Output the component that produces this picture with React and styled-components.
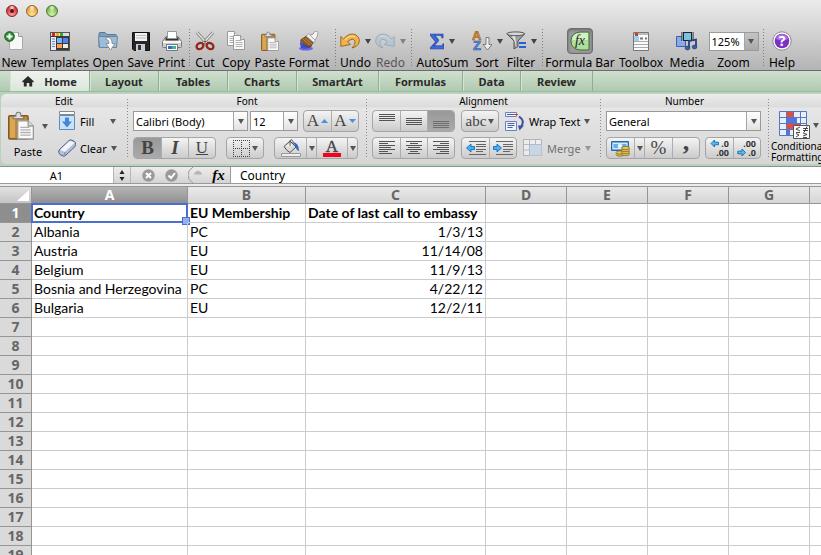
// Libs
import React from 'react';
import styled, { createGlobalStyle } from 'styled-components';

const uiFont = '"Noto Sans", "Open Sans", sans-serif';
const sheetFont = 'Lato, "Open Sans", sans-serif';
const serifFont = '"Liberation Serif", serif';

const GlobalStyle = createGlobalStyle`
  * {
    box-sizing: border-box;
  }

  body {
    margin: 0;
    overflow: hidden;
    font-family: ${uiFont};
    font-size: 12px;
    color: #000;
  }

  button, input, select {
    margin: 0;
    padding: 0;
    border: 0;
    background: none;
    font: inherit;
    color: inherit;
  }

  svg {
    display: block;
    flex: none;
  }
`;

const Window = styled.div`
  height: 100vh;
  display: flex;
  flex-direction: column;
  overflow: hidden;
  background: #fff;
`;

// Title bar and toolbar
const TopBar = styled.header`
  flex: none;
  background: linear-gradient(#ebebeb, #d6d6d6 40%, #b4b4b4);
  border-bottom: 1px solid #6f6a6f;
`;

const TitleBar = styled.div`
  height: 26px;
  display: flex;
  align-items: center;
  gap: 8px;
  padding: 0 6px;
  padding-bottom: 4px;
`;

const Light = styled.button`
  width: 12px;
  height: 12px;
  border-radius: 50%;
  border: 1px solid ${(p) => p.edge};
  background:
    radial-gradient(ellipse at 50% 12%, rgba(255,255,255,.9), rgba(255,255,255,0) 45%),
    radial-gradient(circle at 50% 85%, ${(p) => p.glow}, ${(p) => p.tone} 75%);
  display: flex;
  align-items: center;
  justify-content: center;

  &::after {
    content: '';
    width: 4px;
    height: 4px;
    border-radius: 50%;
    background: ${(p) => (p.dirty ? '#5e0d0d' : 'transparent')};
  }
`;

const Toolbar = styled.div`
  height: 44px;
  display: flex;
`;

const Tool = styled.button`
  flex: none;
  width: ${(p) => p.w}px;
  height: 44px;
  display: flex;
  flex-direction: column;
  align-items: center;
  white-space: nowrap;
  opacity: ${(p) => (p.disabled ? 0.55 : 1)};
`;

const ToolIcon = styled.span`
  height: 30px;
  display: flex;
  align-items: center;
  gap: 5px;
`;

const ToolLabel = styled.span`
  line-height: 13px;
`;

const Pressed = styled.span`
  width: 26px;
  height: 26px;
  display: flex;
  align-items: center;
  justify-content: center;
  border: 1px solid #6d6d6d;
  border-radius: 4px;
  background: #9c9c9c;
  box-shadow: inset 0 1px 3px #666;
`;

const ToolDivider = styled.span`
  flex: none;
  width: 6px;
  height: 40px;
  margin-top: 2px;
  background: radial-gradient(circle, #7d7d7d 0 1px, transparent 1px) center top / 3px 3px repeat-y;
`;

const ZoomField = styled.label`
  flex: none;
  width: 53px;
  display: flex;
  flex-direction: column;
  align-items: center;
`;

// Tabs
const Tabs = styled.nav`
  flex: none;
  height: 20px;
  display: flex;
  padding-left: 10px;
  background: linear-gradient(#cfe0cd, #b0c9b0);
`;

const Tab = styled.button`
  width: ${(p) => p.w}px;
  display: flex;
  align-items: center;
  justify-content: center;
  gap: 10px;
  border-right: 1px solid #8fae93;
  box-shadow: inset 1px 0 #d5e4d4;
  font-size: 11px;
  font-weight: 700;
  color: #2b2b2b;
  background: ${(p) => (p.active ? 'linear-gradient(#eef3ed, #dbe6da)' : 'none')};
`;

// Ribbon
const RibbonFrame = styled.div`
  flex: none;
  padding: 2px 0 2px 1px;
  background: #b9d2bb;
  border-top: 1px solid #9cba9f;
  border-bottom: 1px solid #8f8f8f;
`;

const Ribbon = styled.div`
  height: 70px;
  display: flex;
  border-radius: 5px 0 0 5px;
  background: linear-gradient(#ececec, #dcdcdc 18%, #e6e6e6 20%, #d6d6d6);
  overflow: hidden;
`;

const Group = styled.section`
  flex: none;
  width: ${(p) => p.w}px;
  display: flex;
  flex-direction: column;
`;

const GroupTitle = styled.h2`
  margin: 0;
  height: 14px;
  line-height: 14px;
  font-size: 10px;
  font-weight: 400;
  text-align: center;
`;

const GroupBody = styled.div`
  display: flex;
  flex-direction: column;
  gap: 5px;
  padding: 2px 0 0 5px;
`;

const GroupDivider = styled.span`
  flex: none;
  width: 1px;
  margin: 5px 0;
  background: repeating-linear-gradient(#8b8b8b 0 1px, transparent 1px 3px);
`;

const Line = styled.div`
  height: 22px;
  display: flex;
  align-items: center;
  gap: ${(p) => p.gap || 5}px;
`;

const EditBody = styled.div`
  display: flex;
  gap: 10px;
  padding: 2px 0 0 7px;
`;

const Stack = styled.div`
  display: flex;
  flex-direction: column;
  gap: 5px;
`;

const PasteButton = styled.button`
  width: 40px;
  display: flex;
  flex-direction: column;
  align-items: center;
  gap: 4px;
  padding-top: 1px;
  font-size: 11px;
  line-height: 14px;
`;

const PasteArt = styled.span`
  display: flex;
  align-items: center;
  gap: 8px;
`;

const FlatButton = styled.button`
  width: ${(p) => p.w}px;
  height: 22px;
  display: flex;
  align-items: center;
  gap: 4px;
  font-size: 11px;
  white-space: nowrap;
  opacity: ${(p) => (p.disabled ? 0.5 : 1)};

  svg:last-child {
    margin-left: auto;
  }
`;

const Segments = styled.div`
  flex: none;
  height: 22px;
  display: flex;
  border: 1px solid #a5a5a5;
  border-radius: 4px;
  background: linear-gradient(#f4f4f4, #cbcbcb);
  overflow: hidden;
`;

const Segment = styled.button`
  width: ${(p) => p.w || 27}px;
  display: flex;
  align-items: center;
  justify-content: center;
  gap: 2px;
  color: #444;
  background: ${(p) => (p.on ? 'linear-gradient(#999, #aaa)' : 'none')};

  & + & {
    border-left: 1px solid #adadad;
  }
`;

const Glyph = styled.span`
  font-family: ${serifFont};
  font-size: ${(p) => p.size || 19}px;
  line-height: ${(p) => p.leading || 20}px;
  font-weight: ${(p) => (p.bold ? 700 : 400)};
  font-style: ${(p) => (p.italic ? 'italic' : 'normal')};
  text-decoration: ${(p) => (p.underline ? 'underline' : 'none')};
`;

// the comma hangs on the baseline, so its line box is raised to centre it
const CommaGlyph = styled(Glyph)`
  padding-bottom: 12px;
`;

const ComboBox = styled.span`
  position: relative;
  flex: none;
  display: block;
  width: ${(p) => p.w}px;
  height: ${(p) => p.h || 20}px;
  border: 1px solid #9a9a9a;
  background: #fff;
  font-size: 11px;
`;

const ComboSelect = styled.select`
  appearance: none;
  width: 100%;
  height: 100%;
  padding: 0 16px 0 2px;
  border-radius: 0;
`;

const ComboArrow = styled.span`
  position: absolute;
  top: 0;
  right: 0;
  bottom: 0;
  width: 14px;
  display: flex;
  align-items: center;
  justify-content: center;
  border-left: 1px solid #a5a5a5;
  background: ${(p) => (p.dark ? 'linear-gradient(#c4c4c4, #a9a9a9)' : 'linear-gradient(#fff, #e2e2e2)')};
  pointer-events: none;
`;

const ConditionalButton = styled.button`
  display: flex;
  flex-direction: column;
  padding: 3px 0 0 2px;
  font-size: 10px;
  line-height: 11px;
  text-align: left;
`;

const ConditionalArt = styled.span`
  display: flex;
  align-items: center;
  gap: 3px;
  padding: 0 0 2px 8px;
`;

// Formula bar
const FormulaBar = styled.div`
  flex: none;
  height: 16px;
  display: flex;
  background: linear-gradient(#ededed, #d4d4d4);
`;

const NameBox = styled.input`
  width: 114px;
  background: #fff;
  text-align: center;
  font-size: 11px;
  border-right: 1px solid #b5b5b5;
`;

const BarButton = styled.button`
  width: ${(p) => p.w}px;
  display: flex;
  align-items: center;
  justify-content: center;
  border-right: ${(p) => (p.edge ? '1px solid #b5b5b5' : '0')};
`;

const BarTools = styled.div`
  width: 100px;
  display: flex;
  padding-left: 5px;
  border-right: 1px solid #9a9a9a;
`;

const FormulaInput = styled.input`
  flex: 1;
  min-width: 0;
  background: #fff;
  padding-left: 9px;
  font-size: 12px;
`;

const BarEdge = styled.div`
  flex: none;
  height: 3px;
  border-top: 1px solid #9a9a9a;
  background: #ececec;
`;

// Sheet
const Sheet = styled.main`
  flex: 1;
  min-height: 0;
  overflow: hidden;
`;

const Grid = styled.table`
  width: 100%;
  min-width: 891px;
  table-layout: fixed;
  border-collapse: separate;
  border-spacing: 0;
  font-family: ${sheetFont};
  font-size: 14px;
`;

const Col = styled.col`
  width: ${(p) => (p.w ? `${p.w}px` : 'auto')};
`;

const ColHead = styled.th`
  height: 18px;
  padding: 0;
  border: 1px solid #969696;
  border-left: 0;
  font-family: ${uiFont};
  font-size: 14px;
  line-height: 16px;
  color: ${(p) => (p.active ? '#fff' : '#666')};
  background: ${(p) => (p.active ? 'linear-gradient(#b5b5b5, #8f8f8f)' : 'linear-gradient(#e9e9e9, #d6d6d6)')};
`;

const Corner = styled.th`
  height: 18px;
  padding: 0;
  border: 1px solid #969696;
  border-left: 0;
  background: linear-gradient(#e2e2e2, #c4c4c4);

  svg {
    margin-left: auto;
  }
`;

const RowHead = styled.th`
  height: 19px;
  padding: 0;
  border-right: 1px solid #969696;
  border-bottom: 1px solid #969696;
  font-family: ${uiFont};
  font-size: 14px;
  line-height: 18px;
  color: ${(p) => (p.active ? '#fff' : '#666')};
  background: ${(p) => (p.active ? '#8e8e8e' : '#dadada')};
`;

const Cell = styled.td`
  position: relative;
  height: 19px;
  padding: 0 2px;
  border-right: 1px solid #ccc;
  border-bottom: 1px solid #ccc;
  line-height: 18px;
  white-space: nowrap;
  text-align: ${(p) => (p.right ? 'right' : 'left')};
  font-weight: ${(p) => (p.bold ? 700 : 400)};
`;

const Selection = styled.span`
  position: absolute;
  top: -1px;
  right: -1px;
  bottom: -1px;
  left: -1px;
  border: 2px solid #4a6fd0;
  pointer-events: none;

  &::after {
    content: '';
    position: absolute;
    right: -4px;
    bottom: -4px;
    width: 6px;
    height: 6px;
    border: 1px solid #4a6fd0;
    background: #8fb1ee;
  }
`;

// Icons
const Caret = ({ color = '#555' }) => (
	<svg width="6" height="5" viewBox="0 0 6 5"><path d="M0 0h6L3 5z" fill={color} /></svg>
);

const Page = ({ x, y, w = 12, h = 15 }) => (
	<g transform={`translate(${x} ${y})`}>
		<path d={`M.5.5h${w - 5}l4 4v${h - 5}h-${w - 1}z`} fill="#fafafa" stroke="#999" />
		<path d={`M${w - 4.5}.5v4h4`} fill="#ddd" stroke="#999" />
		<path d={`M2.500 5.500h${w - 6}M2.500 7.500h${w - 5}M2.500 9.500h${w - 5}M2.500 11.500h${w - 5}`} stroke="#b0b0b0" />
	</g>
);

const NewIcon = () => (
	<svg width="20" height="20" viewBox="0 0 20 20">
		<path d="M5.500 1.500h9l4 4v13h-13z" fill="#f8f8f8" stroke="#aaa" />
		<path d="M14.500 1.500v4h4" fill="#ddd" stroke="#999" />
		<circle cx="5.500" cy="5.500" r="4.800" fill="#2f8a32" stroke="#145c18" />
		<path d="M5.500 2.500v6M2.500 5.500h6" stroke="#fff" strokeWidth="2" />
	</svg>
);

const TemplatesIcon = () => (
	<svg width="20" height="20" viewBox="0 0 20 20">
		<rect x=".5" y="1.500" width="19" height="18" fill="#3a3a3a" stroke="#555" />
		<path d="M1 2h18v3H1z" fill="#ddd" />
		<path d="M2 2h3v3H2z" fill="#d22" /><path d="M6 2h3v3H6z" fill="#e9b800" /><path d="M10 2h3v3h-3z" fill="#39a635" />
		<path d="M1 6h5v13H1z" fill="#e8ecf5" />
		<path d="M2 8h3M2 10.500h3M2 13h3M2 15.500h3" stroke="#6e86b8" />
		<path d="M7 7h5v5H7z" fill="#79b3ff" /><path d="M13 7h5v5h-5z" fill="#4c86e8" />
		<path d="M7 13h5v4H7z" fill="#ff9c5a" /><path d="M13 13h5v4h-5z" fill="#f3ede0" />
	</svg>
);

const OpenIcon = () => (
	<svg width="20" height="20" viewBox="0 0 20 20">
		<path d="M1 16V2.500q0-1 1-1h5l2 2h8.500q1 0 1 1V16z" fill="#7b9fbd" stroke="#567b9a" />
		<path d="M.5 5.500h19l-1 11h-17z" fill="#9dbdd6" stroke="#6488a6" />
		<path d="M8 6.500c4-.5 6 1.500 6 6h3l-4.500 6.500L8 12.500h3c0-3-1-4-3-4z" fill="#fff" stroke="#777" strokeWidth=".7" />
	</svg>
);

const SaveIcon = () => (
	<svg width="18" height="19" viewBox="0 0 18 19">
		<path d="M.5.500h17v18H2l-1.500-1.500z" fill="#26262a" stroke="#111" />
		<path d="M3 1h12v8H3z" fill="#f2f2f2" /><path d="M4 3.500h10M4 6h10" stroke="#bbb" />
		<path d="M4 12h9v7H4z" fill="#c9ccd2" /><path d="M6 13h3v5H6z" fill="#333" />
	</svg>
);

const PrintIcon = () => (
	<svg width="20" height="20" viewBox="0 0 20 20">
		<path d="M4 5.500h12l3.500 5v5q0 1-1 1h-17q-1 0-1-1v-5z" fill="#cfcfcf" stroke="#777" />
		<path d="M3.500 6.500h13v3h-13z" fill="#333" />
		<path d="M5.500.500h9v7h-9z" fill="#fff" stroke="#999" />
		<path d="M1 10h18v2H1z" fill="#f4f4f4" />
		<path d="M4.500 13.500h11v6h-11z" fill="#fff" stroke="#777" />
		<path d="M6 15h4v3H6z" fill="#2e6bd8" /><path d="M10 15h4v3h-4z" fill="#3cb8a0" />
	</svg>
);

const CutIcon = () => (
	<svg width="20" height="20" viewBox="0 0 20 20" fill="none">
		<path d="M2 1.500 12.500 13M18 1.500 7.500 13" stroke="#777" strokeWidth="3" />
		<path d="M2 1.500 12.500 13M18 1.500 7.500 13" stroke="#e8e8e8" strokeWidth="1.400" />
		<ellipse cx="5" cy="15" rx="3.600" ry="2.900" transform="rotate(-35 5 15)" stroke="#93291b" strokeWidth="2.400" />
		<ellipse cx="15" cy="15" rx="3.600" ry="2.900" transform="rotate(35 15 15)" stroke="#93291b" strokeWidth="2.400" />
		<circle cx="10" cy="10.500" r="1" fill="#444" />
	</svg>
);

const CopyIcon = () => (
	<svg width="20" height="20" viewBox="0 0 20 20"><Page x={1} y={0} /><Page x={7} y={4} /></svg>
);

const PasteIcon = ({ size = 20 }) => (
	<svg width={size} height={Math.round(size * 1.15)} viewBox="0 0 20 23">
		<rect x=".5" y="3.500" width="15" height="18" rx="1" fill="#bd8733" stroke="#80571b" />
		<path d="M1.500 4.500h4v16h-4z" fill="#d8a857" />
		<path d="M4 6V4h2q0-3 2-3t2 3h2v2z" fill="#ddd" stroke="#777" strokeWidth=".8" />
		<Page x={7} y={7} w={13} h={15} />
	</svg>
);

const FormatIcon = () => (
	<svg width="20" height="20" viewBox="0 0 20 20">
		<ellipse cx="7" cy="17.500" rx="7" ry="2" fill="#6c6ae8" />
		<path d="M1 10q5 6 12 5-4 4-11 2-1-3-1-7z" fill="#3f48d0" />
		<path d="M1.500 9l6-4 7 6-3 5q-7-1-10-7z" fill="#8a5a22" stroke="#54350f" strokeWidth=".7" />
		<path d="M4 8l7 6M6 7l7 6" stroke="#b98a4e" />
		<path d="M7 5l3-2.500L16.500 9 15 12z" fill="#eee" stroke="#888" strokeWidth=".7" />
		<path d="M11 4q4 0 4-3l3-1 1 2q-1 5-3 7z" fill="#f5f5f5" stroke="#888" strokeWidth=".7" />
	</svg>
);

const UndoIcon = ({ flip, fill = '#f0b44c', edge = '#a0681b' }) => (
	<svg width="20" height="18" viewBox="0 0 20 18">
		<g transform={flip ? 'translate(20 0) scale(-1 1)' : undefined}>
			<path d="M.8 4.500 3.500 7Q9 .5 15 2.500q5 2.500 4.200 7.500-1 4.500-7.200 6 4-3.500 3-7-2-4-7.500.8l3 2.700-9.700 1.800z" fill={fill} stroke={edge} />
			<path d="M5 8Q10 2.500 15 4.500" fill="none" stroke="#fff" strokeOpacity=".6" />
		</g>
	</svg>
);

const SigmaIcon = () => (
	<svg width="14" height="20" viewBox="0 0 14 20">
		<text x="7" y="18" textAnchor="middle" fontFamily="Liberation Serif" fontWeight="700" fontSize="24" fill="#3e6ce0" stroke="#1c3fa5" strokeWidth=".7">Σ</text>
	</svg>
);

const SortIcon = () => (
	<svg width="20" height="20" viewBox="0 0 20 20">
		<text x="0" y="9" fontFamily="Liberation Sans" fontWeight="700" fontSize="13" fill="#d98c2b" stroke="#8c5310" strokeWidth=".5">A</text>
		<text x="1" y="19" fontFamily="Liberation Sans" fontWeight="700" fontSize="13" fill="#5a94e6" stroke="#1d4da3" strokeWidth=".5">Z</text>
		<path d="M14 6.500h3v7h3l-4.500 5.500-4.500-5.500h3z" fill="#eee" stroke="#666" strokeWidth=".8" />
	</svg>
);

const FilterIcon = () => (
	<svg width="20" height="20" viewBox="0 0 20 20">
		<path d="M1 3l7 7v8l4-2.500V10l6.500-7z" fill="#a0a0a0" stroke="#555" />
		<path d="M8.500 10 6 5h3l1.500 12z" fill="#e8e8e8" />
		<ellipse cx="9.700" cy="2.800" rx="9" ry="1.900" fill="#d8d8d8" stroke="#555" />
		<path d="M13 12h7M13 16h7" stroke="#2462d6" strokeWidth="2.200" />
	</svg>
);

const FxIcon = () => (
	<svg width="20" height="20" viewBox="0 0 20 20">
		<path d="M10 1h9v18h-9Q1 18 1 10t9-9z" fill="#acdf9b" stroke="#416b38" />
		<path d="M10 2h8v7H2q1-7 8-7z" fill="#d2f1c7" />
		<text x="10" y="14" textAnchor="middle" fontFamily="Liberation Serif" fontStyle="italic" fontSize="14" fill="#222">fx</text>
	</svg>
);

const ToolboxIcon = () => (
	<svg width="16" height="19" viewBox="0 0 16 19">
		<path d="M.5.500h15v18H.5z" fill="#fafafa" stroke="#777" />
		<path d="M1 1h14v2H1z" fill="#bbb" />
		<path d="M1 4h5v5H1z" fill="#9fd0f0" /><path d="M2 1h3v3H2z" fill="#d23a1e" />
		<path d="M7 5.500h3v2H7zM12 5.500h2v2h-2z" fill="#777" />
		<path d="M1 9.500h14M1 12.500h14M1 15.500h14" stroke="#aaa" />
	</svg>
);

const MediaIcon = () => (
	<svg width="22" height="20" viewBox="0 0 22 20">
		<path d="M.5 5.500h9v10h-9z" fill="#88a9ec" stroke="#4060ae" />
		<path d="M5.500 1h12v9h-12z" fill="#222" /><path d="M8 2h7v7H8z" fill="#78c3e5" />
		<path d="M6.500 1.500v9M16.500 1.500v9" stroke="#fff" strokeDasharray="1 1" />
		<path d="M13 17V10l7-1.500V16" fill="none" stroke="#2b3f79" strokeWidth="1.800" />
		<ellipse cx="11.500" cy="17" rx="2.400" ry="1.900" fill="#3e5caa" stroke="#233566" strokeWidth=".6" />
		<ellipse cx="18.500" cy="16" rx="2.400" ry="1.900" fill="#3e5caa" stroke="#233566" strokeWidth=".6" />
	</svg>
);

const HelpIcon = () => (
	<svg width="20" height="20" viewBox="0 0 20 20">
		<circle cx="10" cy="10" r="9.200" fill="#fff" stroke="#888" />
		<circle cx="10" cy="10" r="7.300" fill="#7b2fc4" />
		<path d="M4 8q1-5 6-5t6 5q-6 3-12 0z" fill="#a86be0" />
		<text x="10" y="15" textAnchor="middle" fontFamily="Noto Sans" fontWeight="700" fontSize="14" fill="#fff">?</text>
	</svg>
);

const HomeIcon = () => (
	<svg width="12" height="11" viewBox="0 0 12 11">
		<path d="M6 0 12 5.500l-1 1-.8-.7V10.500H7.300V7H4.700v3.500H1.800V5.800L1 6.500l-1-1z" fill="#2b2b2b" />
	</svg>
);

const FillIcon = () => (
	<svg width="18" height="20" viewBox="0 0 18 20">
		<path d="M1.500.500h15v3h-15z" fill="#fff" stroke="#888" />
		<path d="M1.500 4.500h15v14h-15z" fill="#c9e2f8" stroke="#5e8dba" />
		<path d="M7 6.500h4v4h3L9 16.500 4 10.500h3z" fill="#4586d8" />
	</svg>
);

const ClearIcon = () => (
	<svg width="18" height="18" viewBox="0 0 18 18">
		<path d="M1 11 10.500 2q1.500-1.500 3-1l3 1.500q1.500 1 1 3L17 7.500l-9.500 9q-1 1-2.500.5L2 15.500q-2-1.500-1-4.500z" fill="#b4bfdc" stroke="#555f80" />
		<path d="M2 11 11 2.500q1-.7 2-.3l3.500 1.500L7 12.800z" fill="#f3f5fb" />
		<path d="M7 13v3.500" stroke="#7681a5" />
	</svg>
);

const BordersIcon = () => (
	<svg width="17" height="17" viewBox="0 0 17 17">
		<path d="M0 .5h17M0 8.500h17M0 16.500h17M.5 0v17M8.500 0v17M16.500 0v17" fill="none" stroke="#444" strokeDasharray="1 1" />
	</svg>
);

const BucketIcon = () => (
	<svg width="20" height="18" viewBox="0 0 20 18">
		<path d="M3 7.500 9 2l6 6-6 5.500q-3-1-6-6z" fill="#d9d9d9" stroke="#555" />
		<path d="M5 7.500 9 4l3 3z" fill="#fff" />
		<path d="M9 7V1.500q2-2 3 1V5" fill="none" stroke="#555" />
		<path d="M12 3q6 1 6 9-3-1-3-4z" fill="#2e66c4" />
		<path d="M.5 14.500h19v3H.5z" fill="#eee" stroke="#999" />
	</svg>
);

const FontColorIcon = () => (
	<svg width="18" height="18" viewBox="0 0 18 18">
		<text x="9" y="12.500" textAnchor="middle" fontFamily="Liberation Serif" fontSize="17" fill="#444" stroke="#444" strokeWidth=".4">A</text>
		<path d="M0 14h18v4H0z" fill="#f5001d" />
	</svg>
);

const Delta = ({ down }) => (
	<svg width="7" height="4" viewBox="0 0 7 4"><path d={down ? 'M0 0h7L3.500 4z' : 'M0 4h7L3.500 0z'} fill="#4a90e2" /></svg>
);

// rows holds [x, width] of each text line, two pixels apart
const LinesIcon = ({ rows, top = 0, faded }) => (
	<svg width="16" height="15" viewBox="0 0 16 15">
		{rows.map(([x, w], i) => (
			<path key={i} d={`M${x} ${top + i * 2 + 0.5}h${w}`} stroke={faded ? '#6e6e6e' : '#555'} />
		))}
	</svg>
);

const IndentIcon = ({ right }) => (
	<svg width="20" height="15" viewBox="0 0 20 15">
		<path d="M3 .5h17M10 3.500h10M10 5.500h10M10 8.500h10M10 10.500h7M3 13.500h17" stroke="#666" />
		<path d={right ? 'M8.500 7 4 3v2.500H.5v3H4V11z' : 'M.5 7 5 3v2.500h3.500v3H5V11z'} fill="#45b4f5" stroke="#1b6bb0" strokeWidth=".9" />
	</svg>
);

const WrapIcon = () => (
	<svg width="20" height="19" viewBox="0 0 20 19" fill="none">
		<path d="M.5.500h11v4H.5zM.5 9.500h11v9H.5z" fill="#eef2fb" stroke="#6c80bd" />
		<path d="M2 2.500h6M2.500 11.500h7M2.500 13.500h7M2.500 15.500h5" stroke="#4860a8" />
		<path d="M8 2.500h5" stroke="#e5331f" />
		<path d="M14 4.500q6 4 2.500 9.500" stroke="#3c539e" strokeWidth="2" />
		<path d="M19 13.500h-6l1.500 5z" fill="#3c539e" />
	</svg>
);

const MergeIcon = () => (
	<svg width="20" height="18" viewBox="0 0 20 18">
		<path d="M.5.500h18v16H.5z" fill="#fff" stroke="#888" /><path d="M6 5h12.500v11.500H6z" fill="#b7d3ef" />
		<path d="M.5 5.500h18M6.500.500v16M12.500.500v5M.5 11h6" stroke="#78a0c8" />
	</svg>
);

const MoneyIcon = () => (
	<svg width="19" height="17" viewBox="0 0 19 17">
		<path d="M.5 1.500h17v9H.5z" fill="#69aee6" stroke="#2d679d" />
		<path d="M2 3.500h14v5H2z" fill="none" stroke="#d5ebfb" /><circle cx="9" cy="6" r="2.300" fill="#e8f4fd" />
		<g fill="#e0c45c" stroke="#775e15" strokeWidth=".7">
			<ellipse cx="9" cy="14.500" rx="4" ry="1.700" /><ellipse cx="9" cy="12.500" rx="4" ry="1.700" />
			<ellipse cx="14.500" cy="14" rx="4" ry="1.700" /><ellipse cx="14.500" cy="12" rx="4" ry="1.700" />
			<ellipse cx="14.500" cy="10" rx="4" ry="1.700" /><ellipse cx="14.500" cy="8" rx="4" ry="1.700" />
		</g>
	</svg>
);

const DecimalIcon = ({ less }) => (
	<svg width="20" height="18" viewBox="0 0 20 18" fontFamily="Noto Sans" fontWeight="700" fontSize="9" fill="#333">
		<text x="19" y="8" textAnchor="end">{less ? '.00' : '.0'}</text>
		<text x="19" y="17" textAnchor="end">{less ? '.0' : '.00'}</text>
		<path
			d={less ? 'M8.500 13.500 5 10v2.200H.8v2.600H5V17z' : 'M1 4.500 4.500 1v2.200h4v2.600h-4V8z'}
			fill="#55bdf5" stroke="#1668ae" strokeWidth=".9"
		/>
	</svg>
);

const ConditionalIcon = () => (
	<svg width="31" height="28" viewBox="0 0 31 28">
		<path d="M.5.500h27v24H.5z" fill="#e7eefc" />
		<path d="M7 1h7v6H7zM7 13h14v6H7z" fill="#ea4b37" /><path d="M7 7h11v6H7zM7 19h4v5H7z" fill="#5274dc" />
		<path d="M.5.500h27v24H.5zM.5 6.500h27M.5 12.500h27M.5 18.500h27M7.500.500v24M14.500.500v24M21.500.500v24" fill="none" stroke="#5876bd" />
		<path d="M14.500 14.500h16v13h-16z" fill="#fafafa" stroke="#555" />
		<path d="M21 16l-4 2 4 2M17 21.500h4M24 17.500h5M24 19.500h5M28 15.500l-3 6M17 22.500l3 1.500-3 2M24 22l4 1.500-4 1.500M24 26.500h4" fill="none" stroke="#222" strokeWidth=".8" />
	</svg>
);

const SpinIcon = () => (
	<svg width="6" height="11" viewBox="0 0 6 11"><path d="M3 0l2.500 4h-5zM3 11 .5 7h5z" fill="#222" /></svg>
);

const RoundIcon = ({ d }) => (
	<svg width="13" height="13" viewBox="0 0 13 13">
		<circle cx="6.500" cy="6.500" r="6.200" fill="#999" /><path d={d} fill="none" stroke="#fff" strokeWidth="2" />
	</svg>
);

const BulletIcon = () => (
	<svg width="15" height="16" viewBox="0 0 15 16">
		<path d="M5 0Q0 3 0 8t5 8" fill="none" stroke="#999" />
		<circle cx="10" cy="7.500" r="4" fill="#ddd" /><path d="M6 7.500h8Q13 4 10 4T6 7.500z" fill="#b5b5b5" />
	</svg>
);

const CornerIcon = () => (
	<svg width="16" height="16" viewBox="0 0 16 16"><path d="M14 3v11H2z" fill="#fff" /></svg>
);

const full = [0, 16];

const tabs = [
	['Home', 80], ['Layout', 69], ['Tables', 69], ['Charts', 69], ['SmartArt', 82],
	['Formulas', 84], ['Data', 58], ['Review', 72],
];

const columns = [
	['A', 156], ['B', 118], ['C', 180], ['D', 81], ['E', 81], ['F', 81], ['G', 81], ['H', null],
];

const rows = [
	['Country', 'EU Membership', 'Date of last call to embassy'],
	['Albania', 'PC', '1/3/13'],
	['Austria', 'EU', '11/14/08'],
	['Belgium', 'EU', '11/9/13'],
	['Bosnia and Herzegovina', 'PC', '4/22/12'],
	['Bulgaria', 'EU', '12/2/11'],
];

const ROW_COUNT = 40;

const ToolItem = ({ w, label, icon, menu, disabled }) => (
	<Tool w={w} disabled={disabled}>
		<ToolIcon>
			{icon}
			{menu && <Caret color="#444" />}
		</ToolIcon>
		<ToolLabel>{label}</ToolLabel>
	</Tool>
);

const Combo = ({ w, h, label, options, value, onChange, dark }) => (
	<ComboBox w={w} h={h}>
		<ComboSelect aria-label={label} value={value} onChange={onChange}>
			{options.map((o) => <option key={o}>{o}</option>)}
		</ComboSelect>
		<ComboArrow dark={dark}><Caret /></ComboArrow>
	</ComboBox>
);

class App extends React.Component {
	constructor(props) {
		super(props);
		this.state = {
			tab: 'Home',
			zoom: '125%',
			font: 'Calibri (Body)',
			size: '12',
			format: 'General',
			name: 'A1',
			formula: 'Country',
		};
	}

	handleChange = (key) => (ev) => {
		this.setState({ [key]: ev.target.value });
	};

	renderToolbar() {
		return (
			<Toolbar>
				<ToolItem w={28} label="New" icon={<NewIcon />} />
				<ToolItem w={64} label="Templates" icon={<TemplatesIcon />} />
				<ToolItem w={32} label="Open" icon={<OpenIcon />} />
				<ToolItem w={33} label="Save" icon={<SaveIcon />} />
				<ToolItem w={29} label="Print" icon={<PrintIcon />} />
				<ToolDivider />
				<ToolItem w={26} label="Cut" icon={<CutIcon />} />
				<ToolItem w={36} label="Copy" icon={<CopyIcon />} />
				<ToolItem w={32} label="Paste" icon={<PasteIcon size={18} />} />
				<ToolItem w={46} label="Format" icon={<FormatIcon />} />
				<ToolDivider />
				<ToolItem w={35} label="Undo" icon={<UndoIcon />} menu />
				<ToolItem w={35} label="Redo" icon={<UndoIcon flip fill="#a9c3d8" edge="#6f91ad" />} menu disabled />
				<ToolDivider />
				<ToolItem w={57} label="AutoSum" icon={<SigmaIcon />} menu />
				<ToolItem w={32} label="Sort" icon={<SortIcon />} menu />
				<ToolItem w={36} label="Filter" icon={<FilterIcon />} menu />
				<ToolDivider />
				<ToolItem w={70} label="Formula Bar" icon={<Pressed><FxIcon /></Pressed>} />
				<ToolItem w={52} label="Toolbox" icon={<ToolboxIcon />} />
				<ToolItem w={40} label="Media" icon={<MediaIcon />} />
				<ZoomField>
					<ToolIcon>
						<Combo
							w={50} h={19} dark label="Zoom" value={this.state.zoom}
							options={['100%', '125%', '150%']} onChange={this.handleChange('zoom')}
						/>
					</ToolIcon>
					<ToolLabel>Zoom</ToolLabel>
				</ZoomField>
				<ToolDivider />
				<ToolItem w={32} label="Help" icon={<HelpIcon />} />
			</Toolbar>
		);
	}

	renderEdit() {
		return (
			<Group w={126}>
				<GroupTitle>Edit</GroupTitle>
				<EditBody>
					<PasteButton>
						<PasteArt><PasteIcon size={26} /><Caret /></PasteArt>
						Paste
					</PasteButton>
					<Stack>
						<FlatButton w={58}><FillIcon />Fill<Caret /></FlatButton>
						<FlatButton w={58}><ClearIcon />Clear<Caret /></FlatButton>
					</Stack>
				</EditBody>
			</Group>
		);
	}

	renderFont() {
		return (
			<Group w={238}>
				<GroupTitle>Font</GroupTitle>
				<GroupBody>
					<Line>
						<Line gap={2}>
							<Combo
								w={115} label="Font" value={this.state.font}
								options={['Calibri (Body)', 'Arial', 'Verdana']} onChange={this.handleChange('font')}
							/>
							<Combo
								w={48} label="Font size" value={this.state.size}
								options={['10', '12', '14']} onChange={this.handleChange('size')}
							/>
						</Line>
						<Segments>
							<Segment aria-label="Grow font"><Glyph size={17}>A</Glyph><Delta /></Segment>
							<Segment aria-label="Shrink font"><Glyph size={17}>A</Glyph><Delta down /></Segment>
						</Segments>
					</Line>
					<Line gap={10}>
						<Segments>
							<Segment on><Glyph bold>B</Glyph></Segment>
							<Segment><Glyph bold italic>I</Glyph></Segment>
							<Segment><Glyph size={17} underline>U</Glyph></Segment>
						</Segments>
						<Segments>
							<Segment w={36} aria-label="Borders"><BordersIcon /><Caret /></Segment>
						</Segments>
						<Segments>
							<Segment w={31} aria-label="Fill color"><BucketIcon /></Segment>
							<Segment w={10} aria-label="Fill color menu"><Caret /></Segment>
							<Segment w={31} aria-label="Font color"><FontColorIcon /></Segment>
							<Segment w={10} aria-label="Font color menu"><Caret /></Segment>
						</Segments>
					</Line>
				</GroupBody>
			</Group>
		);
	}

	renderAlignment() {
		return (
			<Group w={233}>
				<GroupTitle>Alignment</GroupTitle>
				<GroupBody>
					<Line gap={6}>
						<Segments>
							<Segment aria-label="Align top"><LinesIcon rows={[full, full, full, full]} /></Segment>
							<Segment aria-label="Align middle"><LinesIcon top={4} rows={[full, full, full, full]} /></Segment>
							<Segment aria-label="Align bottom" on><LinesIcon top={7} faded rows={[full, full, full, full]} /></Segment>
						</Segments>
						<Segments>
							<Segment w={36}><Glyph size={15}>abc</Glyph><Caret /></Segment>
						</Segments>
						<FlatButton w={84}><WrapIcon />Wrap Text<Caret /></FlatButton>
					</Line>
					<Line gap={6}>
						<Segments>
							<Segment aria-label="Align left">
								<LinesIcon rows={[[0, 16], [0, 9], [0, 16], [0, 12], [0, 16], [0, 9], [0, 13]]} />
							</Segment>
							<Segment aria-label="Align center">
								<LinesIcon rows={[[0, 16], [4, 8], [0, 16], [2, 12], [0, 16], [4, 8], [2, 12]]} />
							</Segment>
							<Segment aria-label="Align right">
								<LinesIcon rows={[[0, 16], [7, 9], [0, 16], [4, 12], [0, 16], [7, 9], [3, 13]]} />
							</Segment>
						</Segments>
						<Segments>
							<Segment aria-label="Decrease indent"><IndentIcon /></Segment>
							<Segment aria-label="Increase indent"><IndentIcon right /></Segment>
						</Segments>
						<FlatButton w={68} disabled><MergeIcon />Merge<Caret /></FlatButton>
					</Line>
				</GroupBody>
			</Group>
		);
	}

	renderNumber() {
		return (
			<Group w={167}>
				<GroupTitle>Number</GroupTitle>
				<GroupBody>
					<Line>
						<Combo
							w={155} label="Number format" value={this.state.format}
							options={['General', 'Currency', 'Date']} onChange={this.handleChange('format')}
						/>
					</Line>
					<Line>
						<Segments>
							<Segment aria-label="Currency"><MoneyIcon /></Segment>
							<Segment w={10} aria-label="Currency menu"><Caret /></Segment>
							<Segment w={28}><Glyph size={19}>%</Glyph></Segment>
							<Segment><CommaGlyph size={26} leading={10} bold>,</CommaGlyph></Segment>
						</Segments>
						<Segments>
							<Segment aria-label="Increase decimal"><DecimalIcon /></Segment>
							<Segment aria-label="Decrease decimal"><DecimalIcon less /></Segment>
						</Segments>
					</Line>
				</GroupBody>
			</Group>
		);
	}

	renderSheet() {
		return (
			<Sheet>
				<Grid>
					<colgroup>
						<Col w={32} />
						{columns.map(([name, w]) => <Col key={name} w={w} />)}
					</colgroup>
					<thead>
						<tr>
							<Corner aria-label="Select all"><CornerIcon /></Corner>
							{columns.map(([name]) => (
								<ColHead key={name} scope="col" active={name === 'A'}>{name}</ColHead>
							))}
						</tr>
					</thead>
					<tbody>
						{Array.from({ length: ROW_COUNT }, (_, r) => (
							<tr key={r}>
								<RowHead scope="row" active={r === 0}>{r + 1}</RowHead>
								{columns.map(([name], c) => (
									<Cell key={name} bold={r === 0} right={r > 0 && c === 2}>
										{rows[r] && rows[r][c]}
										{r === 0 && c === 0 && <Selection />}
									</Cell>
								))}
							</tr>
						))}
					</tbody>
				</Grid>
			</Sheet>
		);
	}

	render() {
		return (
			<Window>
				<GlobalStyle />
				<TopBar>
					<TitleBar>
						<Light aria-label="Close" tone="#c92f35" glow="#ff9c9c" edge="#8a2226" dirty />
						<Light aria-label="Minimize" tone="#e29a2c" glow="#ffe79a" edge="#96641b" />
						<Light aria-label="Zoom window" tone="#6eb044" glow="#d6f7a8" edge="#4a7a30" />
					</TitleBar>
					{this.renderToolbar()}
				</TopBar>
				<Tabs>
					{tabs.map(([name, w]) => (
						<Tab key={name} w={w} active={this.state.tab === name} onClick={() => this.setState({ tab: name })}>
							{name === 'Home' && <HomeIcon />}
							{name}
						</Tab>
					))}
				</Tabs>
				<RibbonFrame>
					<Ribbon>
						{this.renderEdit()}
						<GroupDivider />
						{this.renderFont()}
						<GroupDivider />
						{this.renderAlignment()}
						<GroupDivider />
						{this.renderNumber()}
						<GroupDivider />
						<Group w={240}>
							<GroupTitle>Format</GroupTitle>
							<ConditionalButton>
								<ConditionalArt><ConditionalIcon /><Caret /></ConditionalArt>
								<span>Conditional</span>
								<span>Formatting</span>
							</ConditionalButton>
						</Group>
					</Ribbon>
				</RibbonFrame>
				<FormulaBar>
					<NameBox aria-label="Name box" value={this.state.name} onChange={this.handleChange('name')} />
					<BarButton w={17} edge aria-label="Choose name"><SpinIcon /></BarButton>
					<BarTools>
						<BarButton w={24} aria-label="Cancel"><RoundIcon d="M4 4l5 5M9 4L4 9" /></BarButton>
						<BarButton w={23} aria-label="Enter"><RoundIcon d="M3.500 6.500L6 9l4-5" /></BarButton>
						<BarButton w={24} aria-label="Formula builder"><BulletIcon /></BarButton>
						<BarButton w={23}><Glyph size={15} leading={16} bold italic>fx</Glyph></BarButton>
					</BarTools>
					<FormulaInput aria-label="Formula" value={this.state.formula} onChange={this.handleChange('formula')} />
				</FormulaBar>
				<BarEdge />
				{this.renderSheet()}
			</Window>
		);
	}
}

export default App;
